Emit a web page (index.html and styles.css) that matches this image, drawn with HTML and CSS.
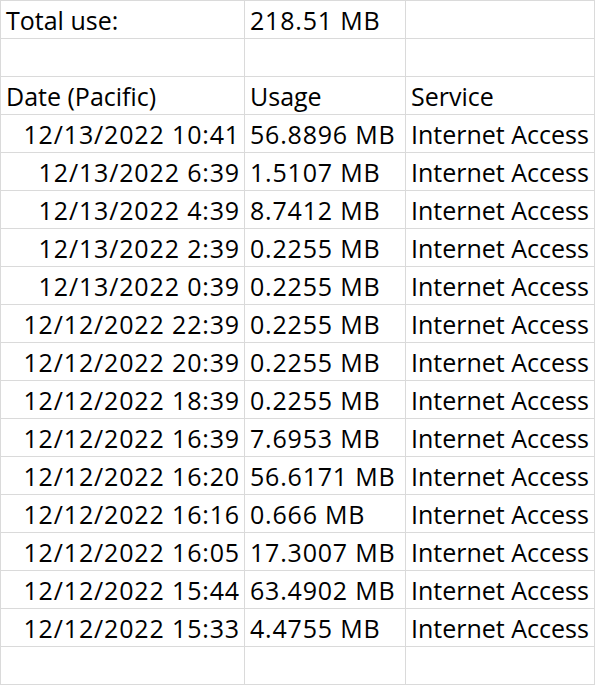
FILE: index.html
```html
<!DOCTYPE html>
<html>
<head>
<meta charset="utf-8">
<link rel="stylesheet" href="styles.css">
</head>
<body>
<div class="sheet">
  <div class="cell">Total use:</div><div class="cell val">218.51 MB</div><div class="cell"></div>
  <div class="cell"></div><div class="cell"></div><div class="cell"></div>
  <div class="cell">Date (Pacific)</div><div class="cell">Usage</div><div class="cell">Service</div>
  <div class="cell num">12/13/2022 10:41</div><div class="cell val">56.8896 MB</div><div class="cell">Internet Access</div>
  <div class="cell num">12/13/2022 6:39</div><div class="cell val">1.5107 MB</div><div class="cell">Internet Access</div>
  <div class="cell num">12/13/2022 4:39</div><div class="cell val">8.7412 MB</div><div class="cell">Internet Access</div>
  <div class="cell num">12/13/2022 2:39</div><div class="cell val">0.2255 MB</div><div class="cell">Internet Access</div>
  <div class="cell num">12/13/2022 0:39</div><div class="cell val">0.2255 MB</div><div class="cell">Internet Access</div>
  <div class="cell num">12/12/2022 22:39</div><div class="cell val">0.2255 MB</div><div class="cell">Internet Access</div>
  <div class="cell num">12/12/2022 20:39</div><div class="cell val">0.2255 MB</div><div class="cell">Internet Access</div>
  <div class="cell num">12/12/2022 18:39</div><div class="cell val">0.2255 MB</div><div class="cell">Internet Access</div>
  <div class="cell num">12/12/2022 16:39</div><div class="cell val">7.6953 MB</div><div class="cell">Internet Access</div>
  <div class="cell num">12/12/2022 16:20</div><div class="cell val">56.6171 MB</div><div class="cell">Internet Access</div>
  <div class="cell num">12/12/2022 16:16</div><div class="cell val">0.666 MB</div><div class="cell">Internet Access</div>
  <div class="cell num">12/12/2022 16:05</div><div class="cell val">17.3007 MB</div><div class="cell">Internet Access</div>
  <div class="cell num">12/12/2022 15:44</div><div class="cell val">63.4902 MB</div><div class="cell">Internet Access</div>
  <div class="cell num">12/12/2022 15:33</div><div class="cell val">4.4755 MB</div><div class="cell">Internet Access</div>
  <div class="cell"></div><div class="cell"></div><div class="cell"></div>
</div>
</body>
</html>
```
FILE: styles.css
```css
html, body {
  margin: 0;
  padding: 0;
  background: #ffffff;
}
.sheet {
  display: grid;
  grid-template-columns: 243px 160px 188px;
  grid-auto-rows: 37px;
  gap: 1px;
  padding: 1px;
  width: max-content;
  background: #dadada;
  font-family: "Open Sans", "Noto Sans", sans-serif;
  font-size: 25px;
  color: #000;
}
.cell {
  background: #ffffff;
  line-height: 37px;
  padding: 1px 5px 0 5px;
  box-sizing: border-box;
  white-space: nowrap;
  overflow: hidden;
}
.num {
  text-align: right;
  letter-spacing: 0.85px;
  padding-right: 4px;
}
.val {
  letter-spacing: 0.8px;
}
```
